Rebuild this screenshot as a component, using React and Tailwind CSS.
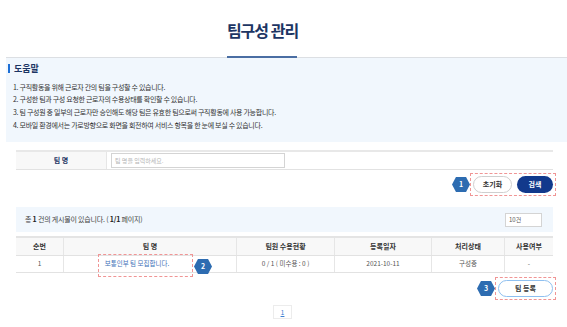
import React from "react";

const helpLines = [
  "1. 구직활동을 위해 근로자 간의 팀을 구성할 수 있습니다.",
  "2. 구성한 팀과 구성 요청한 근로자의 수용상태를 확인할 수 있습니다.",
  "3. 팀 구성원 중 일부의 근로자만 승인해도 해당 팀은 유효한 팀으로써 구직활동에 사용 가능합니다.",
  "4. 모바일 환경에서는 가로방향으로 화면을 회전하여 서비스 항목을 한 눈에 보실 수 있습니다.",
];

const cols = "grid grid-cols-[48px_173px_98px_97px_73px_48px]";

function Badge({ n }) {
  return (
    <span className="flex h-[15px] w-[18px] items-center justify-center bg-[#2d6cb1] text-[7px] font-bold text-white [clip-path:polygon(22%_0,78%_0,100%_50%,78%_100%,22%_100%,0_50%)]">
      {n}
    </span>
  );
}

export default function App() {
  return (
    <div className="h-[327px] w-[567px] overflow-hidden bg-white font-['Noto_Sans_CJK_KR','Noto_Sans',sans-serif] text-[#333]">
      {/* title */}
      <div className="ml-[6px] flex h-[57px] w-[513px] items-center justify-center pt-[3px]">
        <h1 className="text-[16px] font-bold tracking-[-1px] text-[#1c3563]">팀구성 관리</h1>
      </div>
      <div className="relative ml-[6px] h-px bg-[#dcdfe3]">
        <div className="absolute left-[221px] top-[-1px] h-[2px] w-[70px] bg-[#4a6ea3]" />
      </div>

      {/* help */}
      <div className="ml-[6px] h-[84px] bg-[#f1f7fd] pl-[2px] pt-[4px]">
        <div className="flex items-center gap-[4px]">
          <span className="h-[9px] w-[2px] bg-[#1d6fd6]" />
          <span className="text-[9px] font-bold text-[#1c3563]">도움말</span>
        </div>
        <div className="mt-[5px] pl-[5px]">
          {helpLines.map((line) => (
            <p key={line} className="text-[7px] leading-[12.7px] tracking-[-0.3px] text-[#333]">
              {line}
            </p>
          ))}
        </div>
      </div>

      {/* search */}
      <div className="mx-[16px] mt-[8px] w-[537px]">
        <div className="flex h-[20px] border-t-2 border-b border-t-[#e8e8e8] border-b-[#e2e2e2]">
          <div className="flex w-[91px] items-center justify-center border-r border-[#e6e6e6] bg-[#f8f8f8] text-[7px] font-bold text-[#1c3563]">
            팀 명
          </div>
          <div className="flex items-center pl-[4px]">
            <div className="flex h-[15px] w-[174px] items-center border border-[#d4d4d4] bg-white pl-[3px] text-[6px] text-[#b5b5b5]">
              팀 명을 입력하세요.
            </div>
          </div>
        </div>

        <div className="mt-[3px] mr-[-3px] flex items-center justify-end">
          <Badge n="1" />
          <div className="flex items-center gap-[5px] border border-dashed border-[#f09595] px-[2px] py-[2px]">
            <button className="flex h-[17px] w-[39px] items-center justify-center rounded-full border border-[#cfcfcf] bg-white text-[7px] font-bold text-[#333]">
              초기화
            </button>
            <button className="flex h-[17px] w-[36px] items-center justify-center rounded-full bg-[#12398c] text-[7px] font-bold text-white">
              검색
            </button>
          </div>
        </div>

        {/* result info */}
        <div className="mt-[11px] flex h-[25px] items-center justify-between bg-[#f1f7fd] pl-[9px] pr-[11px]">
          <p className="text-[7px] tracking-[-0.2px] text-[#444]">
            총 <b className="text-[#222]">1</b> 건의 게시물이 있습니다. ( <b className="text-[#222]">1/1</b> 페이지)
          </p>
          <div className="flex h-[14px] w-[37px] items-center border border-[#d4d4d4] bg-white pl-[3px] text-[6px] text-[#555]">
            10건
          </div>
        </div>

        {/* table */}
        <div className="mt-[4px] border-t-2 border-[#e4e4e4]">
          <div className={`${cols} h-[18px] border-b border-[#e2e2e2] bg-[#f8f8f8] text-[7px] font-bold text-[#333]`}>
            {["순번", "팀 명", "팀원 수용현황", "등록일자", "처리상태", "사용여부"].map((h, i) => (
              <div key={h} className={`flex items-center justify-center ${i < 5 ? "border-r border-[#e6e6e6]" : ""}`}>
                {h}
              </div>
            ))}
          </div>
          <div className={`${cols} h-[17px] border-b border-[#e2e2e2] text-[6.5px] text-[#555]`}>
            <div className="flex items-center justify-center border-r border-[#e6e6e6]">1</div>
            <div className="relative flex items-center justify-center border-r border-[#e6e6e6]">
              <span className="ml-[-26px] text-[#3d70b8]">보통인부 팀 모집합니다.</span>
              <span className="absolute left-[34px] top-[-2px] h-[23px] w-[95px] border border-dashed border-[#f09595]" />
              <span className="absolute left-[130px] top-[3px]">
                <Badge n="2" />
              </span>
            </div>
            <div className="flex items-center justify-center border-r border-[#e6e6e6]">0 / 1 ( 미수용 : 0 )</div>
            <div className="flex items-center justify-center border-r border-[#e6e6e6]">2021-10-11</div>
            <div className="flex items-center justify-center border-r border-[#e6e6e6]">구성중</div>
            <div className="flex items-center justify-center">-</div>
          </div>
        </div>

        <div className="mt-[4px] mr-[-3px] flex items-center justify-end">
          <Badge n="3" />
          <div className="border border-dashed border-[#f09595] px-[2px] py-[2px]">
            <button className="flex h-[17px] w-[55px] items-center justify-center rounded-full border border-[#8fc0f0] bg-white text-[7px] font-bold text-[#333]">
              팀 등록
            </button>
          </div>
        </div>

        {/* pagination */}
        <div className="mt-[5px] flex justify-center pr-[4px]">
          <div className="flex h-[14px] w-[19px] items-center justify-center border border-[#ececec] bg-white text-[7px] text-[#3d7fd0] underline">
            1
          </div>
        </div>
      </div>
    </div>
  );
}
